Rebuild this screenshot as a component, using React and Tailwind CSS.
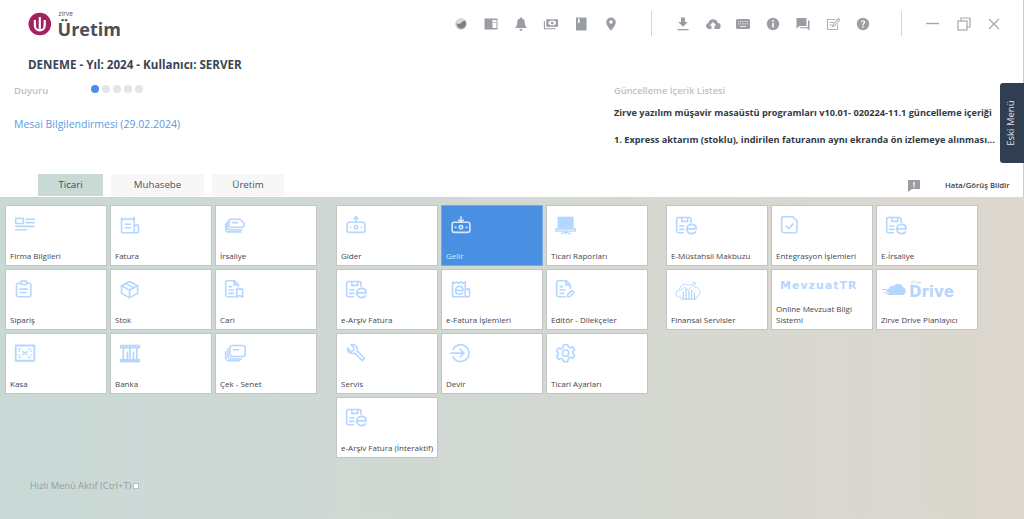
import React from "react";

const S = ({ children, w = 22, h = 20.3, vb = "0 0 26 24", c = "#b5d6ff", sw = 1.9 }) => (
  <svg width={w} height={h} viewBox={vb} fill="none" stroke={c} strokeWidth={sw} strokeLinecap="round" strokeLinejoin="round">{children}</svg>
);

const earsiv = (c) => (
  <S c={c}>
    <path d="M10 21H4a2 2 0 0 1-2-2V5a2 2 0 0 1 2-2h13a2 2 0 0 1 2 2v4" />
    <path d="M8 3v4.500h7V3M5.500 13h5M5.500 17h5" />
    <path d="M14 16.500h11c0-3.500-2-5.500-5.300-5.500S14 13.300 14 16.500s2.300 5.500 5.700 5.500c2 0 3.500-.6 4.800-2" strokeWidth="2" />
  </S>
);
const register = (c, down) => (
  <S c={c}>
    <rect x="2.500" y="8.500" width="21" height="12" rx="2.500" />
    <circle cx="13" cy="14.500" r="2" />
    <path d="M6 14.500h1M19 14.500h1" />
    {down ? <path d="M13 2v6M10.500 6l2.500 2.500L15.500 6" /> : <path d="M13 8V2.500M10.500 4.500L13 2l2.500 2.500" />}
  </S>
);

const icons = {
  firma: (c) => (
    <S c={c}><rect x="2" y="4" width="9" height="6" /><path d="M14 5h10M14 9h10M2 13.500h22M2 17.500h13" /></S>
  ),
  fatura: (c) => (
    <S c={c}><path d="M3 20V4l2.500 1.500L8 4l2.500 1.500L13 4l2.500 1.500L18 3v17a1 1 0 0 1-1 1H4a1 1 0 0 1-1-1z" /><path d="M7.500 11h6M7.500 15h6M18 12h5v8a1 1 0 0 1-1 1h-4" /></S>
  ),
  irsaliye: (c) => (
    <S c={c}><path d="M8 5h11l5 5v1.500a3 3 0 0 1-3 3H8a2 2 0 0 1-2-2V7a2 2 0 0 1 2-2zM10 9h6" /><path d="M4 8v6.500a3 3 0 0 0 3 3h14M2 10.500v6.500a3 3 0 0 0 3 3h15" /></S>
  ),
  siparis: (c) => (
    <S c={c}><path d="M8 5H5a2 2 0 0 0-2 2v12a2 2 0 0 0 2 2h13a2 2 0 0 0 2-2V7a2 2 0 0 0-2-2h-3" /><rect x="8" y="2.500" width="7" height="4" rx="1" /><path d="M7 12h9M7 16h7" /></S>
  ),
  stok: (c) => (
    <S c={c}><path d="M12.500 3l9.500 5v9l-9.500 5L3 17V8z" /><path d="M3 8l9.500 5L22 8M12.500 13v9M8 5.500l9.500 5" /></S>
  ),
  cari: (c) => (
    <S c={c}><path d="M13 21H4a2 2 0 0 1-2-2V4a2 2 0 0 1 2-2h8l5 5v2" /><path d="M12 2v5h5M6 9h3M6 13h5M6 17h5" /><path d="M15 12h7v9.500l-3.500-2-3.500 2z" /></S>
  ),
  kasa: (c) => (
    <S c={c} sw={1.6}><rect x="2" y="3" width="22" height="18" strokeWidth="2.200" /><path d="M6 7h3M17 7h3M6 17h3M17 17h3M10 10l6 4M16 10l-6 4M6 9v1M20 9v1M6 14v1M20 14v1" strokeDasharray="2 1.500" /></S>
  ),
  banka: (c) => (
    <S c={c} sw={2}><path d="M2 3h22v2.500H2zM2 20h22v2H2zM5 7v12M10 11v8M13 7v12M17 11v8M21 7v12" /></S>
  ),
  cek: (c) => (
    <S c={c}><rect x="7" y="3" width="18" height="13" rx="3" /><path d="M11 8h6" /><path d="M4.500 7v8a4 4 0 0 0 4 4H21M2 10v7a4 4 0 0 0 4 4h12" /></S>
  ),
  giderIcon: (c) => register(c, false),
  gelirIcon: (c) => register(c, true),
  rapor: (c) => (
    <svg width="22" height="20.300" viewBox="0 0 26 24" fill={c} stroke={c}><rect x="3.500" y="2.500" width="18" height="13" /><path d="M1 16.500h23v2.500H1zM12.500 19v4M12.500 19.500L7 22.500M12.500 19.500l6 3" fill="none" strokeWidth="1.600" /></svg>
  ),
  earsiv,
  efatura: (c) => (
    <S c={c}><path d="M3 20V3.500l2.500 1.500L8 3.500 10.500 5 13 3.500 15.500 5 18 3.500V21H4a1 1 0 0 1-1-1zM18 12h5v8a1 1 0 0 1-1 1h-4" /><path d="M6.500 13.500h9c0-3-1.700-4.800-4.300-4.800S6.500 10.800 6.500 13.500s1.800 4.500 4.600 4.500c1.500 0 2.800-.5 3.700-1.500" strokeWidth="2" /></S>
  ),
  editor: (c) => (
    <S c={c}><path d="M12 21H4a2 2 0 0 1-2-2V4a2 2 0 0 1 2-2h9l5 5v4" /><path d="M13 2v5h5M6 9h3M6 13h6M6 17h4" /><path d="M15 21v-2.500l5-5 2.500 2.500-5 5z" /></S>
  ),
  servis: (c) => (
    <S c={c}><path d="M3 5l4 4 3-1 1-3-4-4c3.500-1 7 1 7.500 4.500 0 1-.1 1.500-.5 2.500l9 9-2.500 3-9-9c-1 .3-2 .5-3 .3C5 10.800 2.500 8.500 3 5z" transform="translate(0 1)" /></S>
  ),
  devir: (c) => (
    <S c={c}><path d="M3.500 7.500A10 10 0 1 1 3.500 16.500" /><path d="M1 12h15M12 7.500l4.500 4.500-4.500 4.500" /></S>
  ),
  ayar: (c) => (
    <S c={c}><path d="M10 2h5l.8 2.800 2.300 1 2.700-1.300 2.300 3.500-2 2 .1 2.400 2 2-2.300 3.700-2.800-1.300-2.200 1L15 22h-5l-.9-2.800-2.200-1L4.200 19.500 1.900 15.800l2-2L3.800 11.400l-2-2 2.300-3.500L6.900 7l2.300-1z" /><circle cx="12.500" cy="12" r="3.700" /></S>
  ),
  entegre: (c) => (
    <S c={c}><path d="M4 2h11l5 5v12a2 2 0 0 1-2 2H5a3 3 0 0 1-3-3V4a2 2 0 0 1 2-2z" /><path d="M7 13l3.500 3 5-5.500" /></S>
  ),
  finans: (c) => (
    <svg width="26" height="22" viewBox="0 0 28 24" fill="none" stroke={c} strokeWidth="1" strokeLinecap="round">
      <path d="M7 20H5a4 4 0 0 1-.5-8C5 7 10 4 14 7c2-2 6-1 7 2 4 0 6.500 3 6 6-.4 3-2.500 5-5 5h-1" />
      <path d="M9 14v8M12 11v11M15 13v9M18 12v10M21 15v7M7 22h16" strokeWidth="1.400" />
      <path d="M5 13l5-4 4 3 7-7M19 4l3 0 0 3" />
    </svg>
  ),
};

const tiles1 = [
  ["Firma Bilgileri", "firma"], ["Fatura", "fatura"], ["İrsaliye", "irsaliye"],
  ["Sipariş", "siparis"], ["Stok", "stok"], ["Cari", "cari"],
  ["Kasa", "kasa"], ["Banka", "banka"], ["Çek - Senet", "cek"],
];
const tiles2 = [
  ["Gider", "giderIcon"], ["Gelir", "gelirIcon", true], ["Ticari Raporları", "rapor"],
  ["e-Arşiv Fatura", "earsiv"], ["e-Fatura İşlemleri", "efatura"], ["Editör - Dilekçeler", "editor"],
  ["Servis", "servis"], ["Devir", "devir"], ["Ticari Ayarları", "ayar"],
  ["e-Arşiv Fatura (İnteraktif)", "earsiv"],
];

function Tile({ label, icon, active, children }) {
  return (
    <div className={`h-[61px] w-[102px] border ${active ? "border-[#7aa8df] bg-[#4a90e2] text-[#d9e8fa]" : "border-[#c1c6c4] bg-white text-[#3f454d]"} flex flex-col justify-between pb-[4px] pl-[4px] pt-[9px]`}>
      <div className="h-[24px] pl-[4px]">{children || (icons[icon] && icons[icon](active ? "#d4e6fb" : "#b5d6ff"))}</div>
      <div className="whitespace-nowrap text-[8px] font-medium leading-[11px]">{label}</div>
    </div>
  );
}

const G = "#9a9da3";
const Ico = ({ children }) => (
  <svg width="16" height="16" viewBox="0 0 16 16" fill={G}>{children}</svg>
);

const leftIcons = [
  <Ico key="a"><circle cx="8" cy="8" r="6" fill="#d8d9db" /><path d="M3.500 7c1.500 1.500 3 1.500 4.500 0 1-1 2-2 4-2.500 2 3 1 7-2.500 8-3 .8-6-1.500-6-5.500z" fill="#7d8187" /></Ico>,
  <Ico key="b"><path d="M1.500 2.500h13v11h-13z" /><path d="M9.500 4h4v8h-4z" fill="#fff" /><path d="M10.500 6h2v1h-2z" /></Ico>,
  <Ico key="c"><path d="M8 1.500c.7 0 1 .5 1 1 2 .6 2.800 2 2.800 4 0 3 1 4 2 5.500H2.200c1-1.500 2-2.500 2-5.500 0-2 .8-3.400 2.800-4 0-.5.3-1 1-1zM6.500 13h3c0 1-.6 1.800-1.500 1.800S6.500 14 6.500 13z" /></Ico>,
  <svg key="d" width="16" height="16" viewBox="0 0 17 16" fill="none" stroke={G} strokeWidth="1.200"><rect x="3.500" y="3" width="12.500" height="8" fill={G} stroke="none" /><ellipse cx="9.800" cy="7" rx="4" ry="2.600" fill="#fff" stroke="none" /><circle cx="9.800" cy="7" r="1.500" fill={G} stroke="none" /><path d="M1.500 5v8h12" /></svg>,
  <Ico key="e"><path d="M3 1.500h10.500v13H4a1 1 0 0 1-1-1z" /><path d="M5 2.500h1.500v4.500H5z" fill="#fff" /></Ico>,
  <Ico key="f"><path d="M8 1.500a4.800 4.800 0 0 1 4.800 4.800C12.800 9.500 8 14.700 8 14.700S3.200 9.500 3.200 6.300A4.800 4.800 0 0 1 8 1.500z" /><circle cx="8" cy="6" r="1.700" fill="#fff" /></Ico>,
];
const midIcons = [
  <Ico key="a"><path d="M6 1.500h4v4.500h2.800L8 10.700 3.200 6H6z" /><path d="M2.500 13h11v1.300h-11z" /></Ico>,
  <Ico key="b"><path d="M4 13a3 3 0 0 1-.7-5.900A4.900 4.900 0 0 1 12.800 7 3 3 0 0 1 12.500 13H9.500V9.500h2L8 6 4.500 9.500h2V13z" /></Ico>,
  <svg key="c" width="16" height="16" viewBox="0 0 16 16" fill="none"><rect x="1" y="3" width="14" height="10" rx="1.500" fill={G} /><path d="M3 5.500h10M3 7.800h10" stroke="#e8e8e8" strokeDasharray="1 .8" /><path d="M5 10.500h6" stroke="#e8e8e8" /></svg>,
  <Ico key="d"><circle cx="8" cy="8" r="6.200" /><path d="M7.200 7h1.600v4.500H7.200zM7.200 4.300h1.600v1.600H7.200z" fill="#fff" /></Ico>,
  <Ico key="e"><path d="M1.500 2h10v8H4.500l-3 2.500z" /><path d="M13 4.500h1.500v10L12 12.300H5v-1h8z" /></Ico>,
  <svg key="f" width="16" height="16" viewBox="0 0 16 16" fill="none" stroke="#b0b3b7" strokeWidth="1.100"><path d="M12.500 8.500V13.500h-10V3.500h8M4.500 6.500h4M4.500 9h2.500" /><path d="M7.500 10.500l.5-2L13.500 2.500l1.300 1.300-5.500 6z" /></svg>,
  <Ico key="g"><circle cx="8" cy="8" r="6.200" /><path d="M5.800 6.300C5.900 5 6.800 4.200 8.100 4.200c1.300 0 2.200.8 2.200 1.900 0 1.800-1.700 1.700-1.700 3.300H7.300c0-2.200 1.600-2.200 1.600-3.300 0-.5-.3-.8-.8-.8s-.9.4-1 1zM7.300 10.300h1.300v1.400H7.300z" fill="#fff" /></Ico>,
];

function Logo() {
  return (
    <div className="flex w-[93px] items-center gap-[6px]">
      <svg width="24" height="24" viewBox="0 0 24 24">
        <circle cx="12" cy="12" r="11.500" fill="#a3215f" />
        <path d="M7 8v5.500a5 5 0 0 0 10 0V8" fill="none" stroke="#fff" strokeWidth="2.200" />
        <path d="M12 5v12" stroke="#fff" strokeWidth="2.200" />
      </svg>
      <div className="flex h-[24px] flex-col text-[#4b4f55]">
        <span className="-mt-[1px] h-[6px] pl-[1px] text-[6.500px] leading-[6px]">zirve</span>
        <span className="mt-[5px] h-[14px] text-[18px] font-bold leading-[14px]">Üretim</span>
      </div>
    </div>
  );
}

export default function App() {
  return (
    <div className="relative flex h-[519px] w-[1024px] flex-col overflow-hidden bg-white font-['Open_Sans',sans-serif]">
      <div className="h-[197px] border-r border-[#c9ccce]">
        <div className="flex h-[47px] items-center pl-[28px]">
          <Logo />
          <div className="ml-[332px] flex w-[166px] items-center justify-between">{leftIcons}</div>
          <div className="ml-[32px] h-[25px] w-px bg-[#d5d6d8]" />
          <div className="ml-[23px] flex w-[196px] items-center justify-between">{midIcons}</div>
          <div className="ml-[30px] h-[25px] w-px bg-[#d5d6d8]" />
          <div className="ml-[24px] flex w-[74px] items-center justify-between">
            <svg width="13" height="13" viewBox="0 0 13 13" stroke="#a4a7ab" strokeWidth="1.400" fill="none"><path d="M0 6.500h13" /></svg>
            <svg width="14" height="14" viewBox="0 0 14 14" stroke="#a4a7ab" strokeWidth="1.200" fill="none"><rect x="1" y="4" width="9" height="9" /><path d="M4 4V1h9v9h-3" /></svg>
            <svg width="12" height="12" viewBox="0 0 12 12" stroke="#a4a7ab" strokeWidth="1.200" fill="none"><path d="M1 1l10 10M11 1L1 11" /></svg>
          </div>
        </div>

        <div className="pl-[28px] pt-[9px] text-[11.600px] font-bold leading-[17px] text-[#3a4454]">DENEME - Yıl: 2024 - Kullanıcı: SERVER</div>

        <div className="flex h-[101px] pl-[14px]">
          <div className="w-[600px] pt-[11px]">
            <div className="flex h-[14px] items-center">
              <span className="w-[77px] text-[9.500px] font-semibold text-[#bfc0c2]">Duyuru</span>
              <div className="mb-[5px] flex gap-[3px]">
                <span className="h-[8px] w-[8px] rounded-full bg-[#4a90e2]" />
                <span className="h-[8px] w-[8px] rounded-full bg-[#e3e5e8]" />
                <span className="h-[8px] w-[8px] rounded-full bg-[#e3e5e8]" />
                <span className="h-[8px] w-[8px] rounded-full bg-[#e3e5e8]" />
                <span className="h-[8px] w-[8px] rounded-full bg-[#e3e5e8]" />
              </div>
            </div>
            <div className="mt-[19px] text-[10.500px] leading-[14px] text-[#5a9be6]">Mesai Bilgilendirmesi (29.02.2024)</div>
          </div>
          <div className="pt-[11px] text-[9.200px] leading-[13px]">
            <div className="text-[9.300px] font-semibold text-[#c0c1c3]">Güncelleme İçerik Listesi</div>
            <div className="mt-[9px] font-bold text-[#333a44]">Zirve yazılım müşavir masaüstü programları v10.01- 020224-11.1 güncelleme içeriği</div>
            <div className="mt-[14px] font-bold text-[#333a44]">1. Express aktarım (stoklu), indirilen faturanın aynı ekranda ön izlemeye alınması...</div>
          </div>
        </div>

        <div className="flex h-[22px] items-end pl-[38px] text-[9.700px] leading-[22px]">
          <div className="h-[22px] w-[65px] bg-[#c9d9d6] text-center font-medium text-[#454c55]">Ticari</div>
          <div className="ml-[8px] h-[22px] w-[93px] bg-[#f7f7f7] text-center font-medium text-[#4c525a]">Muhasebe</div>
          <div className="ml-[8px] h-[22px] w-[72px] bg-[#f7f7f7] text-center font-medium text-[#4c525a]">Üretim</div>
          <div className="mb-[4px] ml-[623px] flex h-[14px] items-center">
            <svg width="14" height="13" viewBox="0 0 14 13"><path d="M1 1h12v9H5l-4 3z" fill="#9a9da3" /><path d="M6.300 3h1.400v3.500H6.300zM6.300 7.300h1.400v1.300H6.300z" fill="#fff" /></svg>
            <span className="ml-[24px] whitespace-nowrap text-[7.700px] font-semibold leading-[14px] text-[#3c424b]">Hata/Görüş Bildir</span>
          </div>
        </div>
      </div>

      <div className="flex flex-1 flex-col bg-gradient-to-r from-[#c9d9d6] to-[#dcd7cf] pl-[5px] pt-[8px]">
        <div className="flex items-start">
          <div className="grid grid-cols-[repeat(3,102px)] gap-[3px]">
            {tiles1.map(([l, i]) => <Tile key={l} label={l} icon={i} />)}
          </div>
          <div className="ml-[19px] grid grid-cols-[repeat(3,102px)] gap-[3px]">
            {tiles2.map(([l, i, a]) => <Tile key={l} label={l} icon={i} active={a} />)}
          </div>
          <div className="ml-[18px] grid grid-cols-[repeat(3,102px)] gap-[3px]">
            <Tile label="E-Müstahsil Makbuzu" icon="earsiv" />
            <Tile label="Entegrasyon İşlemleri" icon="entegre" />
            <Tile label="E-İrsaliye" icon="earsiv" />
            <Tile label="Finansal Servisler" icon="finans" />
            <Tile label={<>Online Mevzuat Bilgi<br />Sistemi</>}>
              <div className="whitespace-nowrap text-[11px] font-bold leading-[14px] tracking-[1px] text-[#b5d6ff] font-['DejaVu_Sans',sans-serif]">MevzuatTR</div>
            </Tile>
            <Tile label="Zirve Drive Planlayıcı">
              <div className="-ml-[3px] flex h-[22px] items-center gap-[3px]">
                <svg width="24" height="12" viewBox="0 0 24 12" fill="#b5d6ff"><path d="M6 11h14a4 4 0 0 0 1-7.800A5 5 0 0 0 12 2a3.500 3.500 0 0 0-5 2.500A3.500 3.500 0 0 0 6 11zM0 5h6v1H0zM2 8h5v1H2z" /></svg>
                <div className="flex flex-col items-start">
                  <span className="h-[5px] pl-[1px] text-[5px] leading-[5px] text-[#b5d6ff]">zirve</span>
                  <span className="text-[15px] font-bold leading-[15px] text-[#b5d6ff] font-['DejaVu_Sans',sans-serif]">Drive</span>
                </div>
              </div>
            </Tile>
          </div>
        </div>
        <div className="mt-[21px] flex items-center pl-[25px] text-[9.300px] leading-[14px] text-[#939da1]">
          Hızlı Menü Aktif (Ctrl+T)
          <span className="ml-[2px] h-[6px] w-[6px] border border-[#b9bdbf] bg-white" />
        </div>
      </div>

      <div className="absolute right-0 top-[83px] flex h-[80px] w-[24px] items-center justify-center rounded-l-[3px] bg-[#2f3e50]">
        <span className="-rotate-90 whitespace-nowrap text-[9.500px] text-[#e4e7ea]">Eski Menü</span>
      </div>
    </div>
  );
}
